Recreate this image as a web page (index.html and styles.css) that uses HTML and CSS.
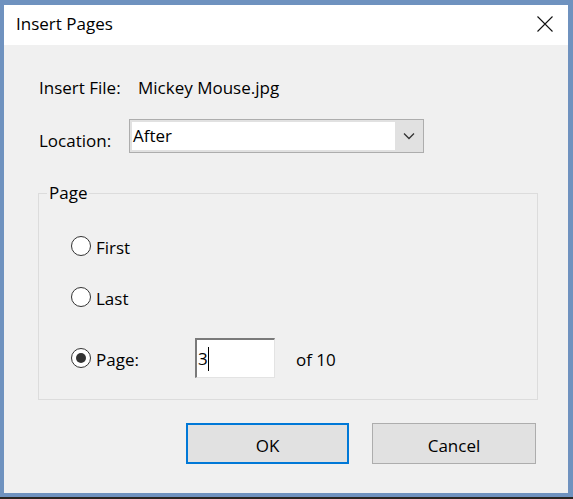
FILE: index.html
```html
<!DOCTYPE html>
<html>
<head>
<meta charset="utf-8">
<link rel="stylesheet" href="styles.css">
</head>
<body>
<div class="frame">
  <div class="window">
    <div class="titlebar">
      <span class="title">Insert Pages</span>
      <svg class="close" width="16" height="16" viewBox="0 0 16 16"><path d="M0.5 0.5 L15.5 15.5 M15.5 0.5 L0.5 15.5" stroke="#111" stroke-width="1.1" fill="none"/></svg>
    </div>
    <div class="content">
      <div class="row-file">
        <span class="label">Insert File:</span>
        <span class="value">Mickey Mouse.jpg</span>
      </div>
      <div class="row-loc">
        <span class="label loc-label">Location:</span>
        <div class="select">
          <div class="select-text">After</div>
          <div class="select-btn">
            <svg width="12" height="8" viewBox="0 0 12 8"><path d="M1 1.5 L6 6.5 L11 1.5" stroke="#333" stroke-width="1.3" fill="none"/></svg>
          </div>
        </div>
      </div>
      <fieldset class="group">
        <legend>Page</legend>
        <div class="radio-row r1"><span class="radio"></span><span>First</span></div>
        <div class="radio-row r2"><span class="radio"></span><span>Last</span></div>
        <div class="radio-row r3">
          <span class="radio checked"></span><span class="page-label">Page:</span>
          <div class="page-input">3<span class="caret"></span></div>
          <span class="of">of 10</span>
        </div>
      </fieldset>
      <div class="buttons">
        <div class="btn ok">OK</div>
        <div class="btn cancel">Cancel</div>
      </div>
    </div>
  </div>
</div>
</body>
</html>
```
FILE: styles.css
```css
html, body {
  margin: 0;
  padding: 0;
}
body {
  width: 573px;
  height: 499px;
  background: #2a2420;
  font-family: "Open Sans", "Noto Sans", sans-serif;
  font-size: 17px;
  color: #000;
  overflow: hidden;
}
.frame {
  height: 497px;
  box-sizing: border-box;
  background: #6f92bf;
  padding: 5px 5px 4px 4px;
}
.window {
  height: 488px;
  display: flex;
  flex-direction: column;
}
.titlebar {
  height: 40px;
  background: #fff;
  display: flex;
  align-items: center;
  padding-left: 12px;
  padding-right: 15px;
}
.title {
  flex: 1;
  line-height: 20px;
  margin-top: -3px;
}
.close {
  margin-top: -3px;
}
.content {
  flex: 1;
  background: #f0f0f0;
  padding: 0 32px 0 34px;
  display: flex;
  flex-direction: column;
}
.label {
  line-height: 24px;
}
.row-file {
  display: flex;
  margin-top: 31px;
  height: 24px;
  padding-left: 1px;
}
.row-file .label {
  width: 99px;
}
.row-loc {
  display: flex;
  margin-top: 19px;
  padding-left: 1px;
}
.loc-label {
  width: 90px;
  margin-top: 10px;
}
.select {
  width: 295px;
  height: 34px;
  box-sizing: border-box;
  border: 1px solid #adadad;
  display: flex;
  background: #e1e1e1;
}
.select-text {
  flex: 1;
  background: #fff;
  margin: 2px 0 2px 2px;
  line-height: 28px;
  padding-left: 1px;
}
.select-btn {
  width: 28px;
  display: flex;
  align-items: center;
  justify-content: center;
}
.group {
  margin: 30px 0 0 0;
  width: 500px;
  height: 217px;
  box-sizing: border-box;
  border: 1px solid #dcdcdc;
  padding: 0 0 0 32px;
}
.group legend {
  padding: 0 2px;
  margin-left: -24px;
  line-height: 20px;
}
.radio-row {
  display: flex;
  align-items: center;
  height: 40px;
}
.radio-row span:not(.radio) {
  padding-top: 2px;
}
.r1 { margin-top: 23px; }
.r2 { margin-top: 11px; }
.r3 { margin-top: 21px; }
.radio {
  width: 20px;
  height: 20px;
  box-sizing: border-box;
  border: 1px solid #333;
  border-radius: 50%;
  background: #fff;
  margin-right: 5px;
  display: flex;
  align-items: center;
  justify-content: center;
}
.radio.checked::after {
  content: "";
  width: 10px;
  height: 10px;
  border-radius: 50%;
  background: #333;
}
.page-label {
  width: 99px;
}
.page-input {
  width: 80px;
  height: 40px;
  box-sizing: border-box;
  background: #fff;
  border-top: 2px solid #7a7a7a;
  border-left: 2px solid #7a7a7a;
  border-right: 1px solid #e3e3e3;
  border-bottom: 1px solid #e3e3e3;
  display: flex;
  align-items: center;
  padding-left: 1px;
}
.caret {
  width: 1px;
  height: 22px;
  background: #000;
}
.of {
  margin-left: 21px;
}
.buttons {
  display: flex;
  justify-content: flex-end;
  gap: 23px;
  margin-top: 23px;
}
.btn {
  width: 163px;
  height: 41px;
  box-sizing: border-box;
  background: #e1e1e1;
  border: 1px solid #adadad;
  display: flex;
  align-items: center;
  justify-content: center;
  padding-top: 3px;
}
.btn.cancel {
  width: 164px;
}
.btn.ok {
  border: 2px solid #0078d7;
}
```
